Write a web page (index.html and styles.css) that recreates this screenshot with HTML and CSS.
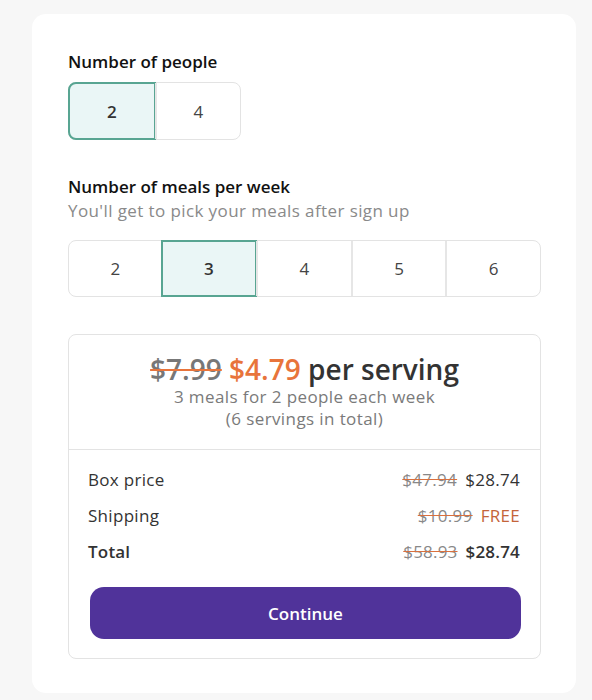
FILE: index.html
```html
<!DOCTYPE html>
<html>
<head>
<meta charset="utf-8">
<link rel="stylesheet" href="styles.css">
</head>
<body>
<div class="card">
  <h2 class="title">Number of people</h2>
  <div class="group people">
    <div class="opt selected">2</div>
    <div class="opt">4</div>
  </div>

  <h2 class="title t2">Number of meals per week</h2>
  <p class="sub">You'll get to pick your meals after sign up</p>
  <div class="group meals">
    <div class="opt">2</div>
    <div class="opt selected">3</div>
    <div class="opt">4</div>
    <div class="opt">5</div>
    <div class="opt">6</div>
  </div>

  <div class="summary">
    <div class="top">
      <div class="headline"><span class="old">$7.99</span> <span class="new">$4.79</span> per serving</div>
      <div class="desc">3 meals for 2 people each week<br>(6 servings in total)</div>
    </div>
    <div class="bottom">
      <div class="row"><span>Box price</span><span class="vals"><s>$47.94</s><span>$28.74</span></span></div>
      <div class="row"><span>Shipping</span><span class="vals"><s>$10.99</s><span class="free">FREE</span></span></div>
      <div class="row total"><span>Total</span><span class="vals"><s>$58.93</s><span>$28.74</span></span></div>
      <button class="cta">Continue</button>
    </div>
  </div>
</div>
</body>
</html>
```

FILE: styles.css
```css
* { box-sizing: border-box; }
html, body { margin: 0; }
body {
  background: #f7f7f7;
  font-family: "Open Sans", "DejaVu Sans", sans-serif;
  color: #333;
  padding: 14px 16px 7px 32px;
}
.card {
  background: #fff;
  border-radius: 14px;
  padding: 36px 35px 35px 36px;
  height: 679px;
}
.title {
  margin: 0;
  font-size: 17px;
  line-height: 24px;
  font-weight: 600;
  color: #111;
}
.t2 { margin-top: 35px; }
.sub {
  margin: 0;
  font-size: 17px;
  letter-spacing: 0.4px;
  line-height: 24px;
  color: #8a8a8a;
}
.group {
  display: flex;
  border: 1px solid #e3e3e3;
  border-radius: 8px;
  background: #fff;
}
.people { width: 173px; height: 58px; margin-top: 8px; }
.meals { height: 57px; margin-top: 17px; }
.opt {
  flex: 1;
  display: flex;
  align-items: center;
  justify-content: center;
  font-size: 17px;
  color: #444;
  border-left: 2px solid #e6e6e6;
}
.opt:first-child { border-left: none; border-radius: 8px 0 0 8px; }
.opt:last-child { border-radius: 0 8px 8px 0; }
.opt.selected {
  background: #eaf6f6;
  border: 2px solid #58a592;
  font-weight: 600;
  color: #333;
  margin: -1px;
}
.meals .opt.selected { border-radius: 0; }
.summary {
  margin-top: 37px;
  border: 1px solid #e3e3e3;
  border-radius: 8px;
  height: 325px;
}
.top {
  padding: 17px 10px 19px;
  text-align: center;
  border-bottom: 1px solid #e3e3e3;
}
.headline {
  font-size: 28px;
  line-height: 34px;
  font-weight: 600;
  color: #333;
}
.old {
  color: #777;
  text-decoration: line-through;
  text-decoration-color: #e8743b;
  text-decoration-thickness: 2px;
}
.new { color: #e8743b; }
.desc {
  font-size: 17px;
  letter-spacing: 0.4px;
  line-height: 22px;
  color: #7a7a7a;
}
.bottom { padding: 18px 20px 0 19px; }
.row {
  display: flex;
  justify-content: space-between;
  font-size: 17px;
  letter-spacing: 0.3px;
  line-height: 24px;
  color: #333;
  margin-bottom: 12px;
}
.row.total { font-weight: 600; margin-bottom: 0; letter-spacing: 0.2px; }
.vals { display: flex; gap: 8px; }
.vals s {
  color: #888;
  font-weight: 400;
  text-decoration-color: #d9703e;
}
.free { color: #c4643a; }
.cta {
  display: block;
  width: 431px;
  margin: 23px 0 0 2px;
  height: 52px;
  border: none;
  border-radius: 14px;
  background: #50339a;
  color: #fff;
  font-family: inherit;
  font-size: 17px;
  font-weight: 600;
}
```
